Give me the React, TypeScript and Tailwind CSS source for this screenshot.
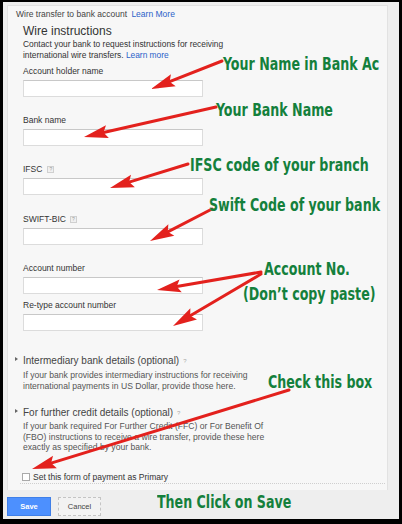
import React from "react";

const Help = ({ cls }: { cls: string }) => (
  <span
    className={
      "inline-flex items-center justify-center w-[7px] h-[7px] border border-[#d0d0d0] bg-[#f0f0f0] text-[5px] leading-none text-[#9a9a9a] " +
      cls
    }
  >
    ?
  </span>
);

type FieldProps = { label: React.ReactNode; mt: string };
const Field = ({ label, mt }: FieldProps) => (
  <div className={mt}>
    <div className="h-[10px] leading-[10px] text-[8.5px] text-[#333] flex items-center">{label}</div>
    <div className="mt-[4px] w-[180px] h-[17px] bg-white border border-[#dcdcdc] border-t-[#c8c8c8]" />
  </div>
);

function Arrow({ x1, y1, x2, y2 }: { x1: number; y1: number; x2: number; y2: number }) {
  const dx = x2 - x1;
  const dy = y2 - y1;
  const len = Math.hypot(dx, dy);
  const ux = dx / len;
  const uy = dy / len;
  const L = 24;
  const W = 6.5;
  const bx = x2 - ux * L;
  const by = y2 - uy * L;
  const px = -uy;
  const py = ux;
  const pts = `${x2},${y2} ${bx + px * W},${by + py * W} ${bx + ux * 4},${by + uy * 4} ${bx - px * W},${by - py * W}`;
  return (
    <g>
      <line x1={x1} y1={y1} x2={bx + ux * 4} y2={by + uy * 4} stroke="#e3211d" strokeWidth={3} strokeLinecap="round" />
      <polygon points={pts} fill="#e3211d" />
    </g>
  );
}

const Note = ({ cls, children }: { cls: string; children: React.ReactNode }) => (
  <div
    className={
      "absolute whitespace-nowrap font-['DejaVu_Sans_Condensed','DejaVu_Sans',sans-serif] font-bold text-[18px] leading-[18px] text-[#14803c] origin-left scale-x-[0.78] " +
      cls
    }
  >
    {children}
  </div>
);

export default function App() {
  return (
    <div className="relative w-[402px] h-[524px] overflow-hidden bg-[#eeeeee] border-solid border-black border-t-[2px] border-l-[3px] border-r-[3px] border-b-[5px] font-['Liberation_Sans',Arial,sans-serif]">
      <div className="ml-[4px] mt-[3px] w-[381px] h-[485px] bg-[#f7f7f7] border border-b-0 border-[#e2e2e2] pl-[8px]">
        <div className="mt-[2px] h-[12px] leading-[12px] text-[8.5px] text-[#444] whitespace-nowrap">
          Wire transfer to bank account <span className="ml-[2px] text-[#2a62c9]">Learn More</span>
        </div>
        <div className="ml-[4px] w-[365px] pl-[3px] border-b border-dotted border-[#cfcfcf] pb-[1px]">
          <div className="mt-[4px] h-[14px] leading-[14px] text-[12px] text-[#333]">Wire instructions</div>
          <div className="mt-[1px] leading-[10.5px] text-[8.4px] text-[#333] whitespace-nowrap">
            Contact your bank to request instructions for receiving
            <br />
            international wire transfers. <span className="text-[#2a62c9]">Learn more</span>
          </div>
          <Field mt="mt-[6px]" label="Account holder name" />
          <Field mt="mt-[18px]" label="Bank name" />
          <Field
            mt="mt-[18px]"
            label={
              <>
                IFSC <Help cls="ml-[5px]" />
              </>
            }
          />
          <Field
            mt="mt-[19px]"
            label={
              <>
                SWIFT-BIC <Help cls="ml-[4px]" />
              </>
            }
          />
          <Field mt="mt-[18px]" label="Account number" />
          <Field mt="mt-[6px]" label="Re-type account number" />

          <div className="mt-[24px] -ml-[8px] flex items-start h-[12px] leading-[12px] text-[10px] text-[#444] whitespace-nowrap">
            <span className="mt-[2px] w-[8px] flex">
              <span className="w-0 h-0 border-y-[2px] border-y-transparent border-l-[3px] border-l-[#666]" />
            </span>
            <span>Intermediary bank details (optional)</span>
            <span className="ml-[4px] mt-[3px] text-[6px] leading-none text-[#aaa]">?</span>
          </div>
          <div className="mt-[3px] leading-[10.5px] text-[8.6px] text-[#555] whitespace-nowrap">
            If your bank provides intermediary instructions for receiving
            <br />
            international payments in US Dollar, provide those here.
          </div>

          <div className="mt-[16px] -ml-[8px] flex items-start h-[12px] leading-[12px] text-[10px] text-[#444] whitespace-nowrap">
            <span className="mt-[2px] w-[8px] flex">
              <span className="w-0 h-0 border-y-[2px] border-y-transparent border-l-[3px] border-l-[#666]" />
            </span>
            <span>For further credit details (optional)</span>
            <span className="ml-[4px] mt-[3px] text-[6px] leading-none text-[#aaa]">?</span>
          </div>
          <div className="mt-[2px] leading-[10.5px] text-[8.6px] text-[#555] whitespace-nowrap">
            If your bank required For Further Credit (FFC) or For Benefit Of
            <br />
            (FBO) instructions to receive a wire transfer, provide these here
            <br />
            exactly as specified by your bank.
          </div>

          <div className="mt-[19px] -ml-[1px] flex items-center h-[10px] leading-[10px] text-[8.5px] text-[#333] whitespace-nowrap">
            <span className="w-[8px] h-[8px] bg-white border border-[#aaaaaa]" />
            <span className="ml-[3px]">Set this form of payment as Primary</span>
          </div>
        </div>
      </div>

      <div className="ml-[4px] mt-[7px] flex gap-[7px]">
        <div className="w-[44px] h-[19px] bg-[#4d90fe] border border-[#3f7fe8] flex items-center justify-center text-white font-bold text-[7.5px]">
          Save
        </div>
        <div className="w-[43px] h-[19px] bg-[#f2f2f2] border border-dashed border-[#c4c4c4] flex items-center justify-center text-[#444] text-[7.5px]">
          Cancel
        </div>
      </div>

      <div className="absolute -left-[3px] -top-[2px] w-[402px] h-[524px] pointer-events-none">
        <svg className="absolute left-0 top-0" width="402" height="524" viewBox="0 0 402 524">
          <Arrow x1={222} y1={61} x2={151} y2={89} />
          <Arrow x1={216} y1={107} x2={84} y2={137} />
          <Arrow x1={188} y1={164} x2={110} y2={188} />
          <Arrow x1={212} y1={209} x2={150} y2={241} />
          <Arrow x1={261} y1={272} x2={157} y2={290} />
          <Arrow x1={261} y1={274} x2={173} y2={326} />
          <Arrow x1={289} y1={390} x2={32} y2={469} />
        </svg>
        <Note cls="left-[223px] top-[55px]">Your Name in Bank Ac</Note>
        <Note cls="left-[216px] top-[101px]">Your Bank Name</Note>
        <Note cls="left-[190px] top-[156px]">IFSC code of your branch</Note>
        <Note cls="left-[209px] top-[196px]">Swift Code of your bank</Note>
        <Note cls="left-[264px] top-[260px]">Account No.</Note>
        <Note cls="left-[243px] top-[285px]">(Don’t copy paste)</Note>
        <Note cls="left-[268px] top-[373px]">Check this box</Note>
        <Note cls="left-[157px] top-[493px]">Then Click on Save</Note>
      </div>
    </div>
  );
}
